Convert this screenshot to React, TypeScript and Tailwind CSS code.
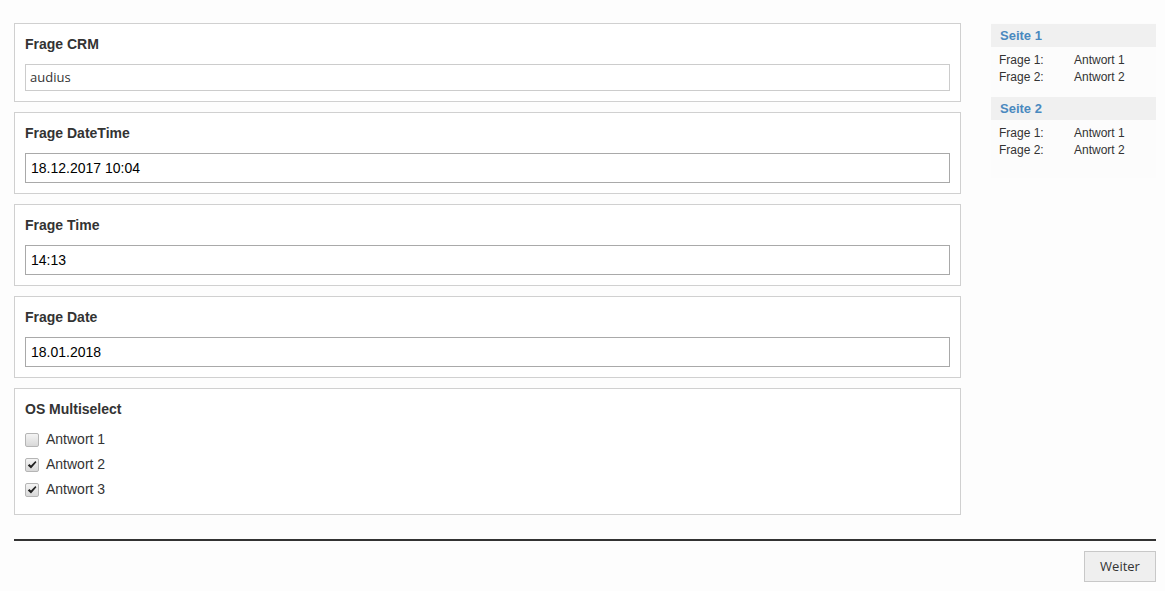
type TextQuestion = { label: string; value: string; kind: 'crm' | 'date' };

const textQuestions: TextQuestion[] = [
  { label: 'Frage CRM', value: 'audius', kind: 'crm' },
  { label: 'Frage DateTime', value: '18.12.2017 10:04', kind: 'date' },
  { label: 'Frage Time', value: '14:13', kind: 'date' },
  { label: 'Frage Date', value: '18.01.2018', kind: 'date' },
];

const answers = [
  { label: 'Antwort 1', checked: false },
  { label: 'Antwort 2', checked: true },
  { label: 'Antwort 3', checked: true },
];

const pages = [
  { title: 'Seite 1', rows: [['Frage 1:', 'Antwort 1'], ['Frage 2:', 'Antwort 2']] },
  { title: 'Seite 2', rows: [['Frage 1:', 'Antwort 1'], ['Frage 2:', 'Antwort 2']] },
];

// old-style grey checkbox with a heavy tick
const Box = ({ checked }: { checked: boolean }) => (
  <span className="flex h-[14px] w-[14px] items-center justify-center rounded-[2px] border border-[#b5b5b5] bg-gradient-to-b from-[#f4f4f4] to-[#d8d8d8]">
    {checked && (
      <svg width="10" height="10" viewBox="0 0 10 10">
        <path d="M0.8 5.4 L2.4 3.9 L4 5.6 L8.4 1 L9.4 2.3 L4 8.6 Z" fill="#222" />
      </svg>
    )}
  </span>
);

const App = () => {
  return (
    <div className="min-h-[591px] bg-[#fdfdfd] pl-[14px] pr-[9px] pt-[23px] font-['Liberation_Sans',Arial,sans-serif] text-[#333]">
      <div className="flex gap-[30px]">
        <div className="flex w-[947px] flex-col gap-[10px]">
          {textQuestions.map((q) => (
            <div key={q.label} className="border border-[#d0d0d0] bg-white px-[10px] pt-[10px] pb-[10px]">
              <div className="h-[20px] text-[14px] font-bold leading-[20px] text-[#333]">{q.label}</div>
              {q.kind === 'crm' ? (
                <div className="mt-[10px] flex h-[27px] items-center border border-[#cccccc] bg-white px-[4px] font-['Open_Sans',sans-serif] text-[13px] text-[#333]">
                  {q.value}
                </div>
              ) : (
                <div className="mt-[10px] flex h-[30px] items-center border border-[#a9a9a9] bg-white px-[5px] text-[14px] text-black">
                  {q.value}
                </div>
              )}
            </div>
          ))}

          <div className="border border-[#d0d0d0] bg-white px-[10px] pt-[10px] pb-[12px]">
            <div className="h-[20px] text-[14px] font-bold leading-[20px] text-[#333]">OS Multiselect</div>
            <div className="mt-[8px] flex flex-col">
              {answers.map((a) => (
                <label key={a.label} className="flex h-[25px] items-center gap-[7px] text-[14px] text-[#333]">
                  <Box checked={a.checked} />
                  {a.label}
                </label>
              ))}
            </div>
          </div>
        </div>

        <aside className="w-[165px] self-start bg-[#fcfcfc] pt-[1px] pb-[20px]">
          {pages.map((p, i) => (
            <div key={p.title} className={i > 0 ? 'mt-[12px]' : ''}>
              <div className="flex h-[23px] items-center bg-[#f0f0f0] px-[9px] text-[13px] font-bold text-[#4a89bf]">
                {p.title}
              </div>
              <div className="mt-[4px] px-[8px]">
                {p.rows.map(([f, a]) => (
                  <div key={f} className="flex h-[17px] items-center text-[12px] text-[#333]">
                    <span className="w-[75px]">{f}</span>
                    <span>{a}</span>
                  </div>
                ))}
              </div>
            </div>
          ))}
        </aside>
      </div>

      <div className="mt-[24px] h-[2px] bg-[#333]" />

      <div className="flex justify-end pt-[10px]">
        <button
          type="button"
          className="h-[31px] w-[72px] border border-[#c8c8c8] bg-[#efefef] font-['Open_Sans',sans-serif] text-[13px] text-[#333]"
        >
          Weiter
        </button>
      </div>
    </div>
  );
};

export default App;
